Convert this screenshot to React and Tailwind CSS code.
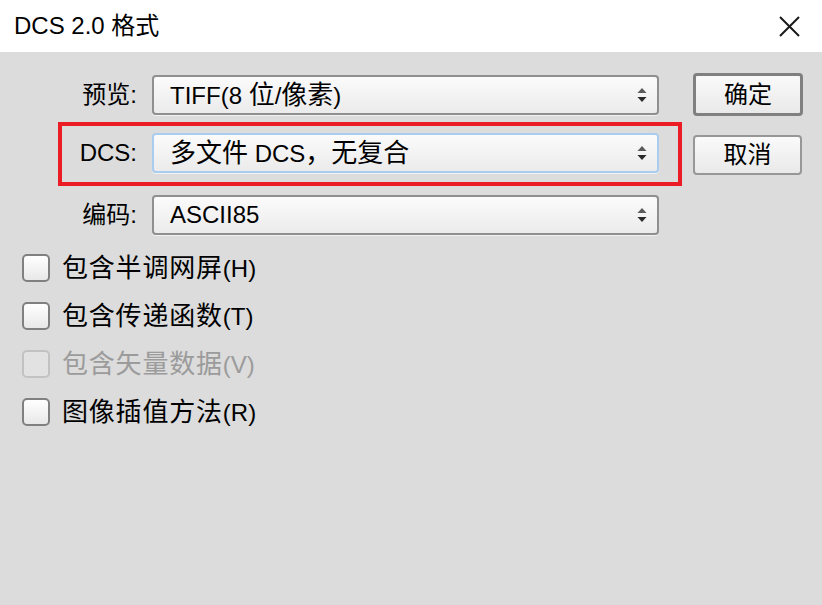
import React from "react";

const font = { fontFamily: '"Liberation Sans", "Noto Sans CJK SC", sans-serif' };

function Arrows() {
  return (
    <svg width="10" height="15" viewBox="0 0 10 15" className="shrink-0">
      <path d="M5 0 L9.5 5 L0.5 5 Z" fill="#5a5a5a" />
      <path d="M0.5 9 L9.5 9 L5 14 Z" fill="#2a2a2a" />
    </svg>
  );
}

function C({ children }) {
  return <span className="text-[26px]">{children}</span>;
}

function Select({ children, focused }) {
  return (
    <div
      className={
        "w-[507px] h-[40px] rounded-[4px] border-2 flex items-center pl-[16px] pr-[10px] bg-gradient-to-b from-[#fbfbfb] to-[#ebebeb] shadow-[0_1px_0_#f2f2f2] " +
        (focused ? "border-[#a9cdef]" : "border-[#8f8f8f]")
      }
    >
      <span className="flex-1 text-[24px] leading-none text-black whitespace-pre">{children}</span>
      <Arrows />
    </div>
  );
}

function Row({ label, children, focused, boxed }) {
  return (
    <div
      className={
        "flex w-[624px] border-4 " +
        (boxed ? "border-[#ec1c24] h-[64px] items-start pt-[7px]" : "border-transparent h-[48px] items-center")
      }
    >
      <div className="w-[75px] h-[40px] flex items-center justify-end text-[24px] leading-none text-black">{label}</div>
      <div className="ml-[15px]">
        <Select focused={focused}>{children}</Select>
      </div>
    </div>
  );
}

function Check({ cjk, tail, disabled }) {
  return (
    <div className="flex items-center h-[48px]">
      <div
        className={
          "w-[28px] h-[28px] rounded-[5px] border-2 " +
          (disabled
            ? "border-[#c2c2c2] bg-[#e2e2e2]"
            : "border-[#808080] bg-gradient-to-b from-[#ffffff] to-[#e8e8e8]")
        }
      />
      <span
        className={
          "ml-[12px] text-[24px] leading-none " + (disabled ? "text-[#9b9b9b]" : "text-black")
        }
      >
        <span className="text-[26px] tracking-[0.8px]">{cjk}</span>
        {tail}
      </span>
    </div>
  );
}

export default function App() {
  return (
    <div className="w-[822px] h-[605px] flex flex-col bg-[#dcdcdc]" style={font}>
      <div className="h-[52px] bg-white flex items-center justify-between pl-[14px] pr-[22px]">
        <span className="text-[24px] leading-none text-black">DCS 2.0 格式</span>
        <svg width="21" height="21" viewBox="0 0 21 21">
          <path d="M1 1 L20 20 M20 1 L1 20" stroke="#1a1a1a" strokeWidth="2" />
        </svg>
      </div>
      <div className="flex">
        <div className="flex flex-col">
          <div className="ml-[58px] mt-[19px]">
            <Row label="预览:">
              TIFF(8 <C>位</C>/<C>像素</C>)
            </Row>
          </div>
          <div className="ml-[58px] mt-[3px]">
            <Row label="DCS:" focused boxed>
              <C>多文件</C> DCS<C>，无复合</C>
            </Row>
          </div>
          <div className="ml-[58px] mt-[5px]">
            <Row label="编码:">ASCII85</Row>
          </div>
          <div className="ml-[22px] mt-[5px] flex flex-col">
            <Check cjk="包含半调网屏" tail="(H)" />
            <Check cjk="包含传递函数" tail="(T)" />
            <Check cjk="包含矢量数据" tail="(V)" disabled />
            <Check cjk="图像插值方法" tail="(R)" />
          </div>
        </div>
        <div className="flex flex-col ml-[11px]">
          <button className="mt-[21px] w-[110px] h-[43px] rounded-[4px] border-[3px] border-[#808080] bg-gradient-to-b from-[#fafafa] to-[#e9e9e9] text-[24px] leading-none text-black">
            确定
          </button>
          <button className="mt-[19px] w-[109px] h-[40px] rounded-[4px] border-2 border-[#979797] bg-gradient-to-b from-[#fafafa] to-[#e9e9e9] text-[24px] leading-none text-black">
            取消
          </button>
        </div>
      </div>
    </div>
  );
}
